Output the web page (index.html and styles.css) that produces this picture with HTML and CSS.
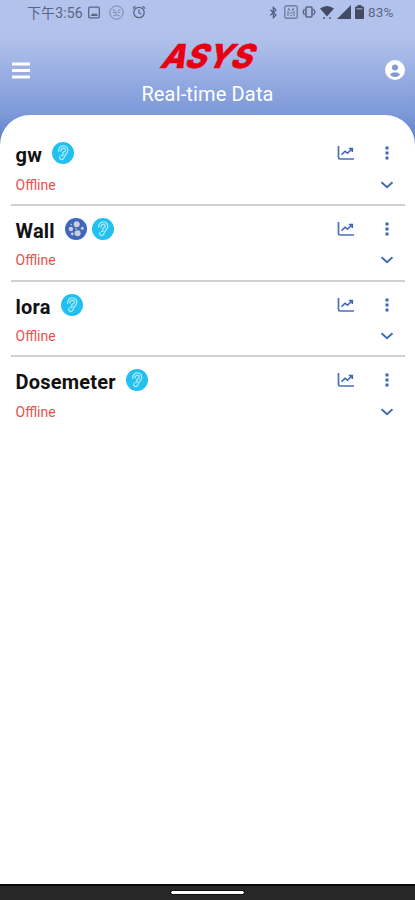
FILE: index.html
```html
<!DOCTYPE html>
<html lang="en">
<head>
<meta charset="utf-8">
<meta name="viewport" content="width=device-width, initial-scale=1">
<title>Real-time Data</title>
<link rel="stylesheet" href="styles.css">
</head>
<body>
<svg class="defs" aria-hidden="true">
  <symbol id="ear" viewBox="0 0 22 22">
    <circle cx="11" cy="11" r="11" fill="#20c0f1"/>
    <path d="M6.600 9.200C6.500 5.600 9 3.800 11.400 3.900c3 .1 4.700 2.500 4.300 5-.4 2.700-2.500 3.400-3.100 5.200-.6 2-1.200 3.700-3 3.500-1.500-.1-2.200-1.400-1.900-2.800M8.900 9c.1-1.900 1.200-2.800 2.500-2.700 1.500.1 2.200 1.400 1.700 2.700-.5 1.200-1.800.7-2.300 1.700-.4.900.8 1.400.2 2.300-.5.800-1.500.6-1.900.3" fill="none" stroke="#a6e7fa" stroke-width="1.400" stroke-linecap="round"/>
  </symbol>
  <symbol id="particles" viewBox="0 0 22 22">
    <circle cx="11" cy="11" r="11" fill="#4167bb"/>
    <g fill="#c9cfdf"><circle cx="11.700" cy="6.300" r="3"/><circle cx="5.900" cy="11" r="2.200"/><circle cx="12.600" cy="15.300" r="3"/><circle cx="17.300" cy="10.300" r="1.500"/><circle cx="7.300" cy="16" r="1.400"/><circle cx="6.300" cy="6.500" r=".8"/><circle cx="11" cy="11" r=".8"/></g>
  </symbol>
  <symbol id="chart" viewBox="0 0 18 16">
    <path d="M1.500 1v11.500q0 1.500 1.500 1.500H17" fill="none" stroke="#4b70bb" stroke-width="1.700"/>
    <path d="M4.500 9.700 8 6.200l2.500 2L15 3.700M11.800 3.500h3.500V7" fill="none" stroke="#3d66b8" stroke-width="1.600"/>
  </symbol>
  <symbol id="more" viewBox="0 0 4 14"><path d="M.5.500h3v3h-3zM.5 5.500h3v3h-3zM.5 10.500h3v3h-3z" fill="#3d66b8"/></symbol>
  <symbol id="down" viewBox="0 0 14 8"><path d="m1.500 1.300 5.500 5 5.500-5" fill="none" stroke="#3e69b6" stroke-width="1.900"/></symbol>
</svg>
<div class="screen">
  <header class="header">
    <div class="status">
      <div class="status-left">
        <span class="clock">下午3:56</span>
        <svg width="12" height="13" viewBox="0 0 12 13" fill="none" stroke="#596681"><rect x=".7" y="1.200" width="10.600" height="10.600" rx="1" stroke-width="1.300"/><path d="M2.500 10 5 7l1.500 1.500L8 7l2 3z" fill="#596681" stroke="none"/></svg>
        <svg class="face" width="15" height="15" viewBox="0 0 15 15" fill="none" stroke="#7583a4"><circle cx="7.500" cy="7.500" r="6.700" stroke-width=".9"/><path d="m3.500 4.500 2.500 1.300M11.500 4.500 9 5.800M4 7.500h2M9 7.500h2M4.500 11q3-2.500 6 0M7 6v3" stroke-width=".9"/></svg>
        <svg class="alarm" width="14" height="14" viewBox="0 0 14 14" fill="none" stroke="#596681"><circle cx="7" cy="7.500" r="5.200" stroke-width="1.300"/><path d="M7 4.500v3.300l2.200 1.300M.8 3.500 3.500 1.200M13.200 3.500l-2.700-2.300" stroke-width="1.200"/></svg>
      </div>
      <div class="status-right">
        <svg width="9" height="13" viewBox="0 0 9 13" fill="none" stroke="#4c5a78" stroke-width="1.200"><path d="m1.300 3.700 5.700 5.200-2.700 2.600v-10L7 4.100 1.300 9.300"/></svg>
        <svg class="nfc" width="14" height="14" viewBox="0 0 14 14" fill="none" stroke="#66738f"><rect x=".8" y=".8" width="12.400" height="12.400" rx="1.500" stroke-width="1.200"/><path d="M4 3.500 6 5.500M10 3.500 8 5.500M4 6v5M10 6v5M5.500 8h3M6.500 10.500h1.500" stroke-width="1.100"/></svg>
        <svg class="vibrate" width="14" height="12" viewBox="0 0 14 12" fill="none" stroke="#596681"><rect x="4" y="1" width="6" height="10" rx="1" stroke-width="1.600"/><path d="m2.500 3-1.500 3 1.500 3M11.500 3 13 6l-1.500 3" stroke-width="1.400"/></svg>
        <svg class="wifi" width="14" height="15" viewBox="0 0 14 15"><path d="M0 3.500Q7-1.500 14 3.500L7 11.500z" fill="#414b61"/><path d="M3 12h2v2H3zM9 12h2v2H9z" fill="#66738f"/></svg>
        <svg class="signal" width="14" height="14" viewBox="0 0 14 14"><path d="M14 0v14H0z" fill="#414b61"/></svg>
        <svg class="battery" width="9" height="14" viewBox="0 0 9 14"><path d="M2.500 0h4v1.500H8q1 0 1 1V13q0 1-1 1H1q-1 0-1-1V2.500q0-1 1-1h1.500z" fill="#414b61"/><path d="M1.500 3h6v1.500h-6z" fill="#8996b5"/></svg>
        <span class="percent">83%</span>
      </div>
    </div>
    <div class="bar">
      <svg class="menu" width="18" height="17" viewBox="0 0 18 17"><path d="M0 2h18M0 8.500h18M0 15h18" stroke="#fff" stroke-width="2.800"/></svg>
      <div class="brand">
        <svg class="logo" width="98" height="26" viewBox="0 0 98 26"><text transform="translate(0 25) skewX(-24)" x="0" y="0" textLength="91" lengthAdjust="spacingAndGlyphs">ASYS</text></svg>
        <h1>Real-time Data</h1>
      </div>
      <svg class="account" width="20" height="20" viewBox="0 0 20 20"><circle cx="10" cy="10" r="10" fill="#fff"/><g fill="#8199d1"><circle cx="10" cy="7.500" r="3"/><path d="M4.800 14.500Q7 12.200 10 12.200t5.200 2.300Q13 17 10 17t-5.200-2.500z"/></g></svg>
    </div>
  </header>
  <main class="card">
    <section class="device">
      <div class="line name-line"><h2>gw</h2><svg class="badge"><use href="#ear"/></svg><svg class="chart"><use href="#chart"/></svg><svg class="more"><use href="#more"/></svg></div>
      <div class="line"><span class="state">Offline</span><svg class="down"><use href="#down"/></svg></div>
    </section>
    <section class="device">
      <div class="line name-line"><h2>Wall</h2><svg class="badge"><use href="#particles"/></svg><svg class="badge next"><use href="#ear"/></svg><svg class="chart"><use href="#chart"/></svg><svg class="more"><use href="#more"/></svg></div>
      <div class="line"><span class="state">Offline</span><svg class="down"><use href="#down"/></svg></div>
    </section>
    <section class="device">
      <div class="line name-line"><h2>lora</h2><svg class="badge"><use href="#ear"/></svg><svg class="chart"><use href="#chart"/></svg><svg class="more"><use href="#more"/></svg></div>
      <div class="line"><span class="state">Offline</span><svg class="down"><use href="#down"/></svg></div>
    </section>
    <section class="device">
      <div class="line name-line"><h2>Dosemeter</h2><svg class="badge"><use href="#ear"/></svg><svg class="chart"><use href="#chart"/></svg><svg class="more"><use href="#more"/></svg></div>
      <div class="line"><span class="state">Offline</span><svg class="down"><use href="#down"/></svg></div>
    </section>
  </main>
  <footer class="nav"><div class="handle"></div></footer>
</div>
</body>
</html>
```
FILE: styles.css
```css
* { box-sizing: border-box; }
body { margin: 0; font-family: Roboto, "Noto Sans CJK TC", sans-serif; }
svg { display: block; flex: none; }
h1, h2 { margin: 0; }
.defs { display: none; }
.screen {
  height: 900px;
  display: flex;
  flex-direction: column;
  overflow: hidden;
  background: linear-gradient(#b3c3ee 0, #b1c1ec 38px, #7c98d8 115px, #5f7dc8 145px);
}
.header { height: 115px; flex: none; }
.status {
  height: 24px;
  padding: 0 19px 0 27px;
  display: flex;
  justify-content: space-between;
  color: #596681;
  font-size: 14px;
}
.status-left, .status-right { display: flex; align-items: center; }
.clock { width: 61px; white-space: nowrap; letter-spacing: 0.1px; }
.face { margin-left: 9px; }
.alarm { margin-left: 8px; }
.nfc { margin-left: 6px; }
.vibrate { margin-left: 4px; }
.wifi { margin-left: 4px; }
.signal { margin-left: 3px; }
.battery { margin-left: 4px; }
.percent { margin-left: 4px; width: 28px; font-size: 13.5px; letter-spacing: 0.2px; }
.bar {
  height: 91px;
  padding: 0 10px 0 12px;
  display: flex;
  justify-content: space-between;
}
.menu { margin-top: 38px; }
.account { margin-top: 36px; }
.brand {
  padding-top: 19px;
  display: flex;
  flex-direction: column;
  align-items: center;
}
.logo { overflow: visible; }
.logo text {
  font: 800 33px Inter, sans-serif;
  fill: #e60012;
  stroke: #e60012;
  stroke-width: 0.5px;
}
.brand h1 {
  margin-top: 12px;
  color: #fff;
  font-weight: 400;
  font-size: 20px;
  line-height: 26px;
  letter-spacing: 0.15px;
  white-space: nowrap;
}
.card {
  flex: 1;
  padding: 15.4px 10px 0 11px;
  background: #fff;
  border-radius: 30px 30px 0 0;
}
.device { height: 75.6px; border-bottom: 2px solid #d0d0d0; }
.device:last-child { border-bottom: 0; }
.line {
  height: 30px;
  padding: 0 11px 0 4.5px;
  display: flex;
  align-items: center;
}
.name-line { height: 46px; padding-right: 16px; }
.line + .line { height: 17px; }
h2 { color: #111; font-size: 20px; font-weight: 700; line-height: 24px; letter-spacing: 0.2px; padding-top: 4px; }
.badge { width: 22px; height: 22px; margin-left: 10px; }
.badge.next { margin-left: 5px; }
.chart { width: 18px; height: 16px; margin-left: auto; }
.more { width: 4px; height: 14px; margin-left: 30px; }
.state { color: #e5524f; font-size: 14px; line-height: 16px; }
.down { width: 14px; height: 8px; margin-left: auto; }
.nav {
  height: 16px;
  flex: none;
  padding-top: 5px;
  background: #272727;
  border-top: 2px solid #080a09;
}
.handle { width: 73px; height: 3px; margin: 0 auto; border-radius: 2px; background: #fff; outline: 1px solid #111; }
```
